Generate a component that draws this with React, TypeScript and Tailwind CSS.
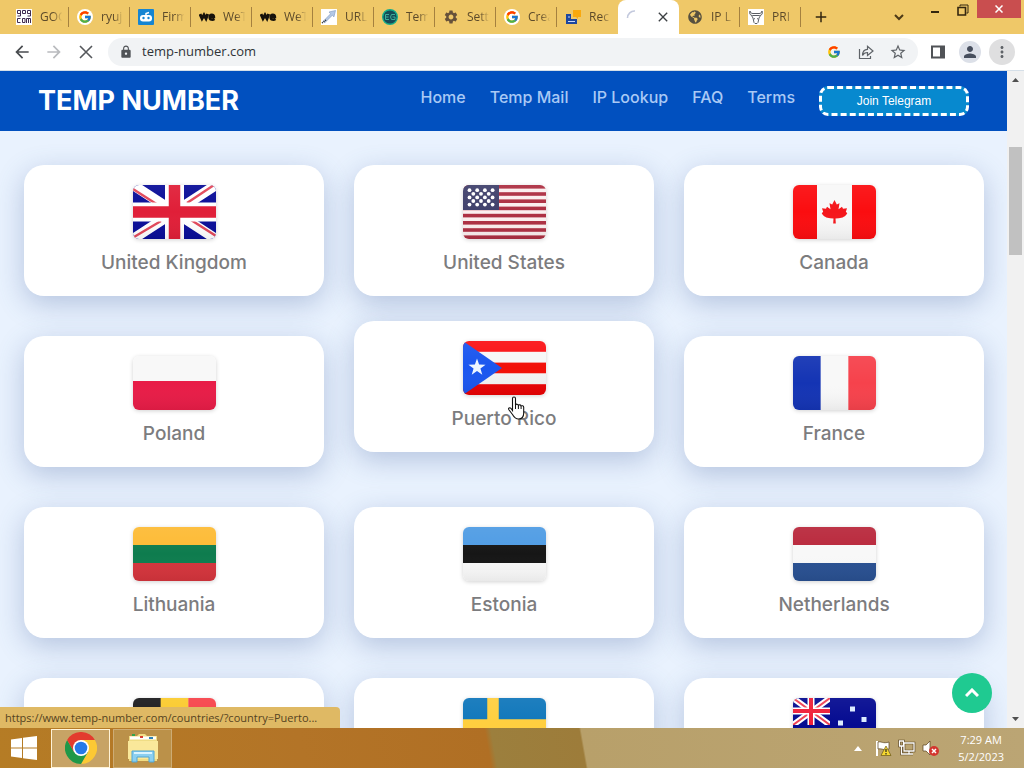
import type { ReactNode } from "react";
import { FcGoogle } from "react-icons/fc";
import { FaGlobeAmericas } from "react-icons/fa";
import {
  MdArrowBack,
  MdArrowForward,
  MdClose,
  MdLock,
  MdMoreVert,
  MdPerson,
  MdSettings,
  MdStarOutline,
  MdAdd,
} from "react-icons/md";

/* ---------- Flags ---------- */

function UnionJack() {
  return (
    <g>
      <rect width="83" height="54" fill="#0a0e98" />
      <path d="M0 0 83 54M83 0 0 54" stroke="#fff" strokeWidth="10" />
      <path d="M0 4 25 20M83 51 58 35M81 0 54 18M1 52 28 36" stroke="#e2485a" strokeWidth="2.400" />
      <path d="M41.500 0V54M0 27H83" stroke="#fff" strokeWidth="19" />
      <path d="M41.500 0V54M0 27H83" stroke="#e01f38" strokeWidth="11.500" />
    </g>
  );
}

function Star({ x, y, r, fill = "#fff" }: { x: number; y: number; r: number; fill?: string }) {
  const points = Array.from({ length: 10 }, (_, i) => {
    const radius = i % 2 === 0 ? r : r * 0.4;
    const angle = (Math.PI / 5) * i - Math.PI / 2;
    return `${x + radius * Math.cos(angle)},${y + radius * Math.sin(angle)}`;
  }).join(" ");
  return <polygon points={points} fill={fill} />;
}

function Bands({ colors, vertical = false }: { colors: string[]; vertical?: boolean }) {
  const size = (vertical ? 83 : 54) / colors.length;
  return (
    <g>
      {colors.map((color, i) =>
        vertical ? (
          <rect key={i} x={i * size} width={size + 0.3} height="54" fill={color} />
        ) : (
          <rect key={i} y={i * size} width="83" height={size + 0.3} fill={color} />
        ),
      )}
    </g>
  );
}

function UnitedStates() {
  const dots: ReactNode[] = [];
  for (let row = 0; row < 5; row++) {
    const count = row % 2 === 0 ? 4 : 3;
    for (let col = 0; col < count; col++) {
      dots.push(
        <circle
          key={`${row}-${col}`}
          cx={6.5 + col * 7.7 + (row % 2 ? 3.8 : 0)}
          cy={5.2 + row * 3.6}
          r="1.9"
          fill="#fff"
        />,
      );
    }
  }
  return (
    <g>
      <rect width="83" height="54" fill="#fbeeee" />
      {Array.from({ length: 8 }, (_, i) => (
        <rect key={i} y={i * 7.2} width="83" height="3.6" fill="#ad2f42" />
      ))}
      <rect width="36" height="25" fill="#40416c" />
      {dots}
    </g>
  );
}

function Canada() {
  return (
    <g>
      <rect width="83" height="54" fill="#f8f8f8" />
      <rect width="24" height="54" fill="#fb0d10" />
      <rect x="59" width="24" height="54" fill="#fb0d10" />
      <path
        d="M41.500 15l2.300 4.500 2.700-1.200-1 6 3.500-2.500 1 2 4-.6-1.200 3.800 1.500 1c-1.500 3.500-5 5-8.500 5.200l-3.300.3.300 5h-2.600l.3-5-3.300-.3c-3.500-.2-7-1.700-8.500-5.200l1.500-1-1.200-3.800 4 .6 1-2 3.500 2.500-1-6 2.700 1.200z"
        fill="#f5161b"
      />
    </g>
  );
}

function PuertoRico() {
  return (
    <g>
      <Bands colors={["#fb1316", "#f7f7f7", "#f21008", "#f3f3f3", "#ea0204"]} />
      <path d="M0 0 39 27 0 54z" fill="#1b56ef" />
      <Star x={14} y={26.5} r={9} fill="#eef5ff" />
    </g>
  );
}

function Sweden() {
  return (
    <g>
      <rect width="83" height="54" fill="#1077bb" />
      <path d="M30 0V54M0 27H83" stroke="#ffcf3f" strokeWidth="11.500" />
    </g>
  );
}

function Australia() {
  return (
    <g>
      <rect width="83" height="54" fill="#050b91" />
      <svg width="37" height="27" viewBox="0 0 37 27" preserveAspectRatio="none">
        <path d="M0 0 37 27M37 0 0 27" stroke="#fff" strokeWidth="6" />
        <path d="M0 0 37 27M37 0 0 27" stroke="#ef4256" strokeWidth="2" />
        <path d="M18 0V27M0 13H37" stroke="#fff" strokeWidth="7" />
        <path d="M18 0V27M0 13H37" stroke="#f01f39" strokeWidth="4" />
      </svg>
      <path d="M57 8.500h5v5h-5zM68.500 19h5v5h-5zM45 22.500h5v5h-5zM57 40h5v5h-5z" fill="#dcecff" />
      <Star x={19} y={40} r={6} />
    </g>
  );
}

function Flag({ children }: { children: ReactNode }) {
  return (
    <svg
      viewBox="0 0 83 54"
      className="h-[54px] w-[83px] rounded-md shadow-[0_1px_4px_rgba(0,0,0,0.18)]"
      aria-hidden="true"
    >
      <defs>
        <linearGradient id="gloss" x1="0" y1="0" x2="0" y2="1">
          <stop offset="0" stopColor="#fff" stopOpacity="0.06" />
          <stop offset="0.500" stopColor="#fff" stopOpacity="0" />
          <stop offset="1" stopColor="#000" stopOpacity="0.06" />
        </linearGradient>
      </defs>
      {children}
      <rect width="83" height="54" fill="url(#gloss)" />
    </svg>
  );
}

const countries: { name: string; flag: ReactNode; raised?: boolean }[] = [
  { name: "United Kingdom", flag: <UnionJack /> },
  { name: "United States", flag: <UnitedStates /> },
  { name: "Canada", flag: <Canada /> },
  {
    name: "Poland",
    flag: (
      <g>
        <rect width="83" height="54" fill="#f8f8f8" />
        <rect y="25" width="83" height="29" fill="#e81c47" />
      </g>
    ),
  },
  { name: "Puerto Rico", flag: <PuertoRico />, raised: true },
  { name: "France", flag: <Bands vertical colors={["#1434b4", "#f8f8f8", "#f6424c"]} /> },
  { name: "Lithuania", flag: <Bands colors={["#fdbb35", "#0e7c4e", "#d4343c"]} /> },
  { name: "Estonia", flag: <Bands colors={["#4f9ce4", "#161616", "#f8f8f8"]} /> },
  { name: "Netherlands", flag: <Bands colors={["#b9283c", "#f8f8f8", "#295091"]} /> },
  { name: "Belgium", flag: <Bands vertical colors={["#1c1c1e", "#fbcb2e", "#f7434b"]} /> },
  { name: "Sweden", flag: <Sweden /> },
  { name: "Australia", flag: <Australia /> },
];

/* ---------- Browser tabs ---------- */

function GogIcon() {
  return (
    <svg viewBox="0 0 16 16" className="size-4">
      <rect width="16" height="16" fill="#fff" />
      <g fill="none" stroke="#402c53" strokeWidth="1">
        <path d="M4.500 4.500H1.500V1.500h3v5.500h-3M6.500 1.500h3v3h-3zM14.500 4.500h-3V1.500h3v5.500h-3M4.500 9.500h-3v4h3M6.500 9.500h2.500v4H6.500zM10.500 14V9.500h4V14M12.500 9.500V14" />
      </g>
    </svg>
  );
}

function GoogleIcon() {
  return (
    <span className="flex size-4 items-center justify-center rounded-full bg-white">
      <FcGoogle className="size-3.5" />
    </span>
  );
}

function RobotIcon() {
  return (
    <svg viewBox="0 0 16 16" className="size-4">
      <rect width="16" height="16" rx="1" fill="#1685d2" />
      <rect x="2" y="6" width="12" height="6.500" rx="3" fill="#fff" />
      <path d="M8 6.500V4.500l3-1" stroke="#fff" strokeWidth="1.500" fill="none" />
      <circle cx="5.500" cy="9" r="1.200" fill="#1685d2" />
      <circle cx="10.500" cy="9" r="1.200" fill="#1685d2" />
    </svg>
  );
}

function WeIcon() {
  return (
    <svg viewBox="0 0 17 16" className="h-4 w-[17px] shrink-0">
      <path d="M1 5 3 9.500 5 6 7 9.500 8.700 5" fill="none" stroke="#17120b" strokeWidth="3" />
      <path d="M10.800 8h4.200c0-3.300-4.400-3-4.400.2 0 3 3.300 2.800 4.900 1.800" fill="none" stroke="#17120b" strokeWidth="2.400" />
    </svg>
  );
}

function ArrowLinkIcon() {
  return (
    <svg viewBox="0 0 16 16" className="size-4">
      <rect width="16" height="16" fill="#fff" />
      <path d="M14.500 1.500 8 3l1.600 1.800L2 12.500l1.800 1.200 7.600-7.500 1.500 1.700z" fill="#b5c9e6" stroke="#7f99be" strokeWidth=".6" />
      <path d="m1 14 4-3" stroke="#252525" strokeWidth="1.500" strokeDasharray="1 1" />
    </svg>
  );
}

function CodeGlobeIcon() {
  return (
    <svg viewBox="0 0 16 16" className="size-4">
      <circle cx="8" cy="8" r="7.300" fill="#154b58" stroke="#16ad8b" strokeWidth="1.400" />
      <path d="M7 5.500H3.500v5H7M3.500 8h3M13 5.500H9.500L8.500 8l1 2.500H13V8h-2.500" fill="none" stroke="#3fae98" />
    </svg>
  );
}

function RecordIcon() {
  return (
    <svg viewBox="0 0 16 16" className="size-4">
      <path d="M8 1h8v7h-3v2l-2-2H8z" fill="#f9a90e" />
      <path d="M1 5h5v5h6v5H1z" fill="#1d479f" />
      <path d="M3 12.500h7M3 8h2" stroke="#c8d8f4" />
    </svg>
  );
}

function BullIcon() {
  return (
    <svg viewBox="0 0 16 16" className="size-4">
      <rect width="16" height="16" fill="#fff" />
      <path
        d="M2 2c-1 3 .5 4.500 2.500 4.500h7C13.500 6.500 15 5 14 2M3.500 6.500 5 9l1 4.500 1 1h2l1-1L11 9l1.500-2.500M2 2c.5 2 1.500 2.500 3 2.500h6c1.500 0 2.500-.5 3-2.500M6 9.500l1 .5m3-.5L9 10"
        fill="none"
        stroke="#5a5e64"
        strokeWidth="1"
      />
    </svg>
  );
}

const tabs: { title: string; icon: ReactNode }[] = [
  { title: "GOG", icon: <GogIcon /> },
  { title: "ryuj", icon: <GoogleIcon /> },
  { title: "Firm", icon: <RobotIcon /> },
  { title: "WeT", icon: <WeIcon /> },
  { title: "WeT", icon: <WeIcon /> },
  { title: "URL", icon: <ArrowLinkIcon /> },
  { title: "Tem", icon: <CodeGlobeIcon /> },
  { title: "Sett", icon: <MdSettings className="size-4 text-[#66513a]" /> },
  { title: "Crea", icon: <GoogleIcon /> },
  { title: "Rec", icon: <RecordIcon /> },
];

function Tab({ title, icon, divider = true }: { title: string; icon: ReactNode; divider?: boolean }) {
  return (
    <button className="relative flex h-full w-[61px] shrink-0 items-center gap-2 pr-1 pl-2 text-left">
      <span className="flex w-4 shrink-0 justify-center">{icon}</span>
      <span className="min-w-0 flex-1 overflow-hidden whitespace-nowrap text-[12px] text-[#5c4a2a] [mask-image:linear-gradient(to_right,black_50%,transparent_90%)]">
        {title}
      </span>
      {divider && <span className="absolute right-0 h-5 w-px bg-[#a5813f]" />}
    </button>
  );
}

function TabStrip() {
  return (
    <div className="flex h-[34px] shrink-0 justify-between bg-[#efc868]">
      <div className="flex pl-2">
        {tabs.map((tab, i) => (
          <Tab key={i} {...tab} divider={i < tabs.length - 1} />
        ))}
        <div className="flex w-[61px] items-center justify-between rounded-t-lg bg-white px-2">
          <svg viewBox="0 0 16 16" className="size-4" aria-hidden="true">
            <path d="M1.500 9A7 7 0 0 1 9 2" fill="none" stroke="#c3c9dd" strokeWidth="1.600" />
          </svg>
          <button aria-label="Close tab">
            <MdClose className="size-4 text-[#3c4043]" />
          </button>
        </div>
        <Tab title="IP L" icon={<FaGlobeAmericas className="size-3.5 text-[#57503f]" />} />
        <Tab title="PRI" icon={<BullIcon />} />
        <button aria-label="New tab" className="flex w-10 items-center justify-center">
          <MdAdd className="size-[18px] text-[#33260f]" />
        </button>
      </div>
      <div className="flex pr-[3px]">
        <button aria-label="Search tabs" className="flex w-9 items-center justify-center">
          <svg viewBox="0 0 12 8" className="h-2 w-3" fill="none" stroke="#4d3a17" strokeWidth="2">
            <path d="m2 2 4 4 4-4" />
          </svg>
        </button>
        <button aria-label="Minimize" className="flex h-6 w-9 items-center justify-center">
          <span className="h-0.5 w-2 bg-[#33260f]" />
        </button>
        <button aria-label="Restore" className="flex h-5 w-6 items-center pl-1">
          <svg viewBox="0 0 12 12" className="size-3" fill="none" stroke="#33260f">
            <path d="M3 2.500V1h8v8H9.500" />
            <path d="M1 3.500h7.500V11H1z" strokeWidth="1.600" />
          </svg>
        </button>
        <button aria-label="Close window" className="flex h-[18px] w-11 items-center justify-center bg-[#c94e4f]">
          <svg viewBox="0 0 8 8" className="size-2" stroke="#fff" strokeWidth="1.500">
            <path d="m.5.500 7 7m0-7-7 7" />
          </svg>
        </button>
      </div>
    </div>
  );
}

function IconButton({ label, children }: { label: string; children: ReactNode }) {
  return (
    <button aria-label={label} className="flex w-8 shrink-0 items-center justify-center text-[#5f6368]">
      {children}
    </button>
  );
}

function Toolbar() {
  return (
    <div className="flex h-[37px] shrink-0 items-center border-b border-[#d5dfe8] bg-white px-1.5">
      <IconButton label="Back">
        <MdArrowBack className="size-5 text-[#484b4f]" />
      </IconButton>
      <IconButton label="Forward">
        <MdArrowForward className="size-5 text-[#b9bbbe]" />
      </IconButton>
      <IconButton label="Stop loading">
        <svg viewBox="0 0 14 14" className="size-3.5" stroke="#55585c" strokeWidth="1.600">
          <path d="m1 1 12 12m0-12L1 13" />
        </svg>
      </IconButton>
      <div className="mr-1 ml-1.5 flex h-7 min-w-0 flex-1 items-center rounded-full bg-[#f1f3f5] pr-1 pl-[11px]">
        <MdLock className="size-3.5 shrink-0 text-[#505357]" />
        <input
          aria-label="Address"
          defaultValue="temp-number.com"
          className="ml-[9px] min-w-0 flex-1 bg-transparent text-[13px] text-[#303338] outline-none"
        />
        <IconButton label="Search with Google">
          <FcGoogle className="size-3.5" />
        </IconButton>
        <IconButton label="Share">
          <svg viewBox="0 0 16 16" className="size-4" fill="none" stroke="#5f6368" strokeWidth="1.200">
            <path d="M1.500 5v9.500h11V12" />
            <path d="M4.500 11.500C4.500 8 6 5.500 9.500 5.300V2.200L15 7l-5.500 4.500V8.500c-2.500 0-4 1-5 3z" />
          </svg>
        </IconButton>
        <IconButton label="Bookmark">
          <MdStarOutline className="size-[18px]" />
        </IconButton>
      </div>
      <IconButton label="Side panel">
        <svg viewBox="0 0 14 14" className="size-3.5">
          <path d="M1 1.500h12v11H1z" fill="none" stroke="#505357" strokeWidth="2" />
          <path d="M9 1.500h4v11H9z" fill="#505357" />
        </svg>
      </IconButton>
      <IconButton label="Profile">
        <span className="flex size-[22px] items-center justify-center rounded-full bg-[#dce0e8]">
          <MdPerson className="size-[18px] text-[#474f5e]" />
        </span>
      </IconButton>
      <IconButton label="Menu">
        <span className="flex size-[26px] items-center justify-center rounded-full bg-[#dfdfe0]">
          <MdMoreVert className="size-[18px]" />
        </span>
      </IconButton>
    </div>
  );
}

/* ---------- Page ---------- */

const links = ["Home", "Temp Mail", "IP Lookup", "FAQ", "Terms"];

function SiteHeader() {
  return (
    <header className="flex h-[60px] items-center justify-between bg-[#0150bf] px-[38px]">
      <a href="#" className="text-[27px] font-bold text-white">
        TEMP NUMBER
      </a>
      <div className="flex gap-6">
        <nav className="flex gap-6 text-[16px] leading-[22px] font-medium text-[#a9c9f5]">
          {links.map((link) => (
            <a key={link} href="#">
              {link}
            </a>
          ))}
        </nav>
        <button className="h-[30px] w-[150px] rounded-[9px] border-3 border-dashed border-white bg-[#0789cf] font-['Liberation_Sans',sans-serif] text-[12px] text-white">
          Join Telegram
        </button>
      </div>
    </header>
  );
}

function CountryGrid() {
  return (
    <main className="grid grid-cols-3 gap-x-[30px] gap-y-10 pt-[34px] pr-[23px] pl-6">
      {countries.map((country) => (
        <a
          key={country.name}
          href="#"
          className={`flex h-[131px] flex-col items-center gap-2 rounded-[20px] bg-white pt-5 shadow-[0_8px_28px_rgba(70,100,160,0.32)] ${
            country.raised ? "-translate-y-[15px]" : ""
          }`}
        >
          <Flag>{country.flag}</Flag>
          <span className="text-[19px] leading-8 font-medium text-[#7c7c7e]">{country.name}</span>
        </a>
      ))}
    </main>
  );
}

function ScrollBar() {
  return (
    <div className="flex w-[17px] shrink-0 flex-col items-center bg-[#f1f1f1]" aria-hidden="true">
      <svg viewBox="0 0 17 17" className="size-[17px]">
        <path d="M5 11h7L8.500 7z" fill="#505050" />
      </svg>
      <div className="mt-[59px] h-[108px] w-[13px] bg-[#c1c1c1]" />
      <svg viewBox="0 0 17 17" className="mt-auto size-[17px]">
        <path d="M5 6h7l-3.500 4z" fill="#505050" />
      </svg>
    </div>
  );
}

function HandCursor() {
  return (
    <svg viewBox="0 0 18 24" className="absolute top-[325px] left-[507px] h-6 w-[18px]" aria-hidden="true">
      <path
        d="M5.500 14.500V2.500c0-2 3-2 3 0V9c.5-1.300 2.700-1 2.900.4.6-1 2.500-.7 2.700.7.8-.8 2.600-.3 2.600 1.200V17c0 3.500-2 6-5.200 6-3.300 0-4.600-2-6-4.500l-3.600-4.700c-1-1.500.8-2.700 2-1.500z"
        fill="#fff"
        stroke="#111"
        strokeWidth="1.100"
      />
      <path d="M8.500 9v4M11.400 9.500V13M14.100 10.500V13" stroke="#111" fill="none" />
    </svg>
  );
}

/* ---------- Taskbar ---------- */

function ChromeLogo() {
  return (
    <svg viewBox="0 0 48 48" className="size-8">
      <path d="M24 12h20.800a24 24 0 0 1-20.800 36l10.400-18z" fill="#fcc934" />
      <path d="M34.400 30 24 48A24 24 0 0 1 3.200 12l10.400 18z" fill="#1f9848" />
      <path d="M13.600 30 3.200 12a24 24 0 0 1 41.600 0H24z" fill="#e33b2e" />
      <circle cx="24" cy="24" r="12" fill="#fff" />
      <circle cx="24" cy="24" r="9.500" fill="#2579e8" />
    </svg>
  );
}

function FolderIcon() {
  return (
    <svg viewBox="0 0 32 32" className="size-8">
      <path d="M2 4h8l2-2h6l2 2h10v25H2z" fill="#f0dd84" />
      <path d="M3 6h26" stroke="#fff" strokeWidth="3" />
      <path d="M5 3h3" stroke="#31a34e" strokeWidth="2" />
      <path d="M13 5h3" stroke="#d9402f" strokeWidth="2" />
      <path d="M22 6h4" stroke="#2e82b8" strokeWidth="2" />
      <path d="M1 9h30v18H1z" fill="#fae89a" />
      <path d="M5 30V19h22v11h-5v-5H10v5z" fill="#8bcff0" stroke="#51a6d3" />
      <path d="M7 21h18" stroke="#d9f4ff" strokeWidth="2" />
    </svg>
  );
}

function Taskbar() {
  return (
    <footer className="flex h-10 shrink-0 items-center justify-between bg-[linear-gradient(80deg,#b57c25_0px,#b37427_300px,#b06f24_484px,#9c7f3d_490px,#9d7c3a_577px,#b8a06a_579px,#bba574_100%)] text-white">
      <div className="flex h-full items-center">
        <button aria-label="Start" className="flex w-[51px] justify-center pr-1">
          <svg viewBox="0 0 28 26" className="h-[26px] w-7" fill="#fff">
            <path d="M1 4.500 12 3v9.500H1zM13 2.800 27 1v11.500H13zM1 13.500h11V23L1 21.500zM13 13.500h14V25l-14-1.800z" />
          </svg>
        </button>
        <button aria-label="Chrome" className="flex h-[39px] w-[59px] items-center justify-center border border-[#fff3d8] bg-[#c7a365]">
          <ChromeLogo />
        </button>
        <button aria-label="File Explorer" className="ml-[3px] flex h-[39px] w-[59px] items-center justify-center border border-[#cdac75] bg-[#bb9149]">
          <FolderIcon />
        </button>
      </div>
      <div className="flex items-center gap-1.5 pr-5">
        <svg viewBox="0 0 8 5" className="h-[5px] w-2" fill="#fff">
          <path d="M0 5h8L4 0z" />
        </svg>
        <svg viewBox="0 0 18 18" className="ml-1.5 size-[18px]">
          <path d="M3 2v15" stroke="#fff" strokeWidth="2" />
          <path d="M4 3c3-1 5 2 11 0v7c-5 2-7-1-11 0z" fill="#fff" stroke="#57401b" strokeWidth=".7" />
          <path d="m12 7 5 9.500H7z" fill="#f6d832" stroke="#6c5815" strokeWidth=".7" />
          <path d="M12 10v3m0 1v1.500" stroke="#222" strokeWidth="1.200" />
        </svg>
        <svg viewBox="0 0 18 18" className="size-[18px]" fill="none">
          <path d="M6 4h10v8H6zM11 12v3M8 15h7M3.500 7v8H8M1.500 2h4v5h-4z" stroke="#57401b" strokeWidth="2.600" />
          <path d="M6 4h10v8H6zM11 12v3M8 15h7M3.500 7v8H8M1.500 2h4v5h-4z" stroke="#fff" strokeWidth="1.300" />
        </svg>
        <svg viewBox="0 0 18 18" className="size-[18px]">
          <path d="M1 6h3l4-4v14l-4-4H1z" fill="#fff" stroke="#57401b" strokeWidth=".7" />
          <circle cx="12" cy="12" r="5" fill="#d3362f" />
          <path d="m10 10 4 4m0-4-4 4" stroke="#fff" strokeWidth="1.500" />
        </svg>
        <div className="ml-3 text-center text-[11px] leading-[17px]">
          <div>7:29 AM</div>
          <div>5/2/2023</div>
        </div>
      </div>
    </footer>
  );
}

export default function App() {
  return (
    <div className="flex h-screen flex-col overflow-hidden font-['Open_Sans',sans-serif]">
      <TabStrip />
      <Toolbar />
      <div className="flex min-h-0 flex-1">
        <div className="relative min-w-0 flex-1 overflow-hidden bg-[#e9f2fe] font-['Inter',sans-serif]">
          <SiteHeader />
          <CountryGrid />
          <HandCursor />
          <button
            aria-label="Back to top"
            className="absolute right-[15px] bottom-[15px] flex size-10 items-center justify-center rounded-full bg-[#1fca91]"
          >
            <svg viewBox="0 0 14 10" className="h-2.5 w-3.5" fill="none" stroke="#fff" strokeWidth="3">
              <path d="m1 8 6-6 6 6" />
            </svg>
          </button>
          <div className="absolute bottom-0 left-0 w-[340px] truncate rounded-tr bg-[#dfb964] px-[5px] font-['Open_Sans',sans-serif] text-[11px] leading-[21px] text-[#554321]">
            https://www.temp-number.com/countries/?country=Puerto...
          </div>
        </div>
        <ScrollBar />
      </div>
      <Taskbar />
    </div>
  );
}
